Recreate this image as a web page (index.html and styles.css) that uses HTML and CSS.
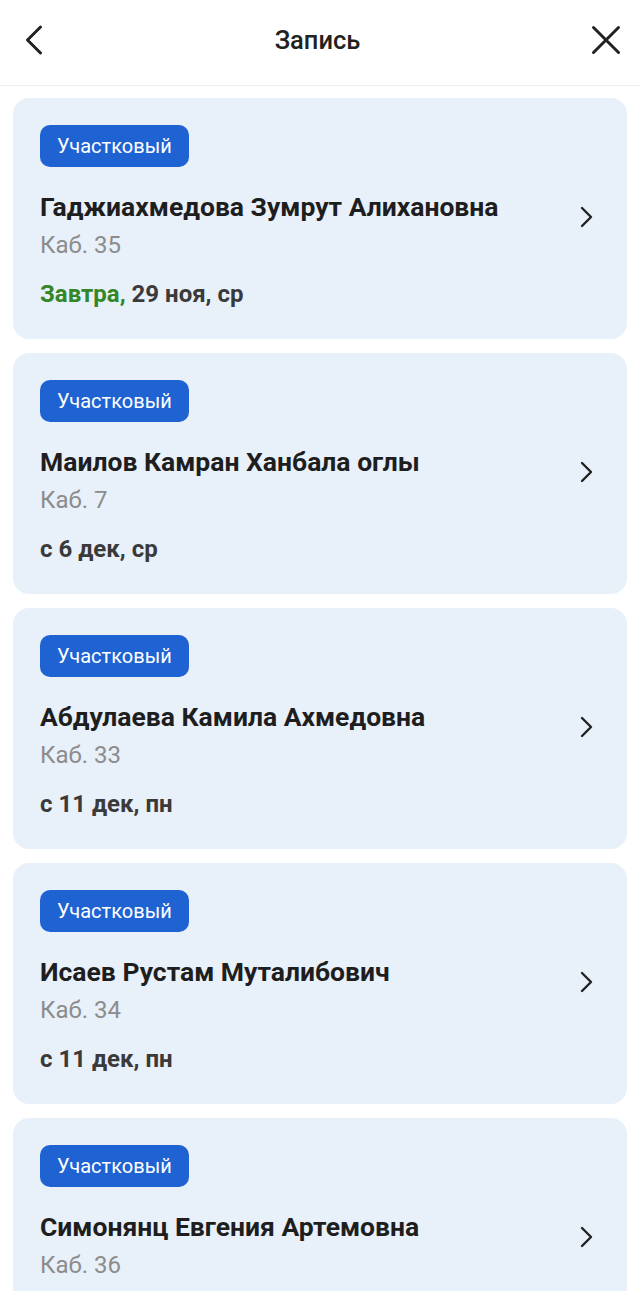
FILE: index.html
```html
<!DOCTYPE html>
<html lang="ru">

<head>
  <title>Запись</title>
  <meta charset="UTF-8">
  <link rel="stylesheet" href="styles.css">
</head>

<body>
  <div class="topo">
    <span class="botao">
      <svg width="20" height="30" viewBox="0 0 20 30"><path d="M16.5 2 L3.5 15 L16.5 28" fill="none" stroke="#222" stroke-width="3" stroke-linecap="round" stroke-linejoin="round"/></svg>
    </span>
    <h1>Запись</h1>
    <span class="botao">
      <svg width="30" height="30" viewBox="0 0 30 30"><path d="M2.5 2.5 L27.5 27.5 M27.5 2.5 L2.5 27.5" fill="none" stroke="#222" stroke-width="3" stroke-linecap="round"/></svg>
    </span>
  </div>

  <div class="lista">
    <div class="cartao">
      <div class="info">
        <span class="tipo">Участковый</span>
        <h2>Гаджиахмедова Зумрут Алихановна</h2>
        <p class="kab">Каб. 35</p>
        <p class="data"><span class="verde">Завтра,</span> 29 ноя, ср</p>
      </div>
      <svg class="seta" width="14" height="22" viewBox="0 0 14 22"><path d="M3 2 L12 11 L3 20" fill="none" stroke="#222" stroke-width="2.4" stroke-linecap="round" stroke-linejoin="round"/></svg>
    </div>

    <div class="cartao">
      <div class="info">
        <span class="tipo">Участковый</span>
        <h2>Маилов Камран Ханбала оглы</h2>
        <p class="kab">Каб. 7</p>
        <p class="data">с 6 дек, ср</p>
      </div>
      <svg class="seta" width="14" height="22" viewBox="0 0 14 22"><path d="M3 2 L12 11 L3 20" fill="none" stroke="#222" stroke-width="2.4" stroke-linecap="round" stroke-linejoin="round"/></svg>
    </div>

    <div class="cartao">
      <div class="info">
        <span class="tipo">Участковый</span>
        <h2>Абдулаева Камила Ахмедовна</h2>
        <p class="kab">Каб. 33</p>
        <p class="data">с 11 дек, пн</p>
      </div>
      <svg class="seta" width="14" height="22" viewBox="0 0 14 22"><path d="M3 2 L12 11 L3 20" fill="none" stroke="#222" stroke-width="2.4" stroke-linecap="round" stroke-linejoin="round"/></svg>
    </div>

    <div class="cartao">
      <div class="info">
        <span class="tipo">Участковый</span>
        <h2>Исаев Рустам Муталибович</h2>
        <p class="kab">Каб. 34</p>
        <p class="data">с 11 дек, пн</p>
      </div>
      <svg class="seta" width="14" height="22" viewBox="0 0 14 22"><path d="M3 2 L12 11 L3 20" fill="none" stroke="#222" stroke-width="2.4" stroke-linecap="round" stroke-linejoin="round"/></svg>
    </div>

    <div class="cartao">
      <div class="info">
        <span class="tipo">Участковый</span>
        <h2>Симонянц Евгения Артемовна</h2>
        <p class="kab">Каб. 36</p>
        <p class="data">с 11 дек, пн</p>
      </div>
      <svg class="seta" width="14" height="22" viewBox="0 0 14 22"><path d="M3 2 L12 11 L3 20" fill="none" stroke="#222" stroke-width="2.4" stroke-linecap="round" stroke-linejoin="round"/></svg>
    </div>
  </div>
</body>

</html>
```

FILE: styles.css
```css
* {
  font-family: Roboto, 'Noto Sans', sans-serif;
  margin: 0;
  padding: 0;
  box-sizing: border-box;
}

body {
  background-color: white;
  color: rgb(31, 31, 31);
}

.topo {
  height: 86px;
  padding: 0 19px 6px 24px;
  display: flex;
  justify-content: space-between;
  align-items: center;
  border-bottom: 1px solid rgb(236, 238, 240);
}

.topo h1 {
  font-size: 25.5px;
  font-weight: 500;
  color: rgb(34, 34, 34);
}

.botao {
  display: flex;
  align-items: center;
}

.lista {
  padding: 12px 13px 20px;
  display: flex;
  flex-direction: column;
  gap: 14px;
}

.cartao {
  background-color: rgb(232, 240, 250);
  border-radius: 16px;
  padding: 27px 34px 31px 27px;
  display: flex;
  justify-content: space-between;
  align-items: center;
}

.tipo {
  display: inline-block;
  height: 42px;
  line-height: 42px;
  padding: 0 17px;
  border-radius: 10px;
  background-color: rgb(31, 99, 211);
  color: white;
  font-size: 20px;
}

.info h2 {
  margin-top: 24px;
  font-size: 26.5px;
  font-weight: 700;
  line-height: 32px;
  color: rgb(30, 30, 30);
}

.kab {
  margin-top: 8px;
  font-size: 24px;
  line-height: 28px;
  color: rgb(140, 140, 140);
}

.data {
  margin-top: 21px;
  font-size: 24px;
  font-weight: 700;
  line-height: 28px;
  color: rgb(58, 58, 58);
}

.verde {
  color: rgb(52, 135, 38);
}

.seta {
  flex-shrink: 0;
}
```
